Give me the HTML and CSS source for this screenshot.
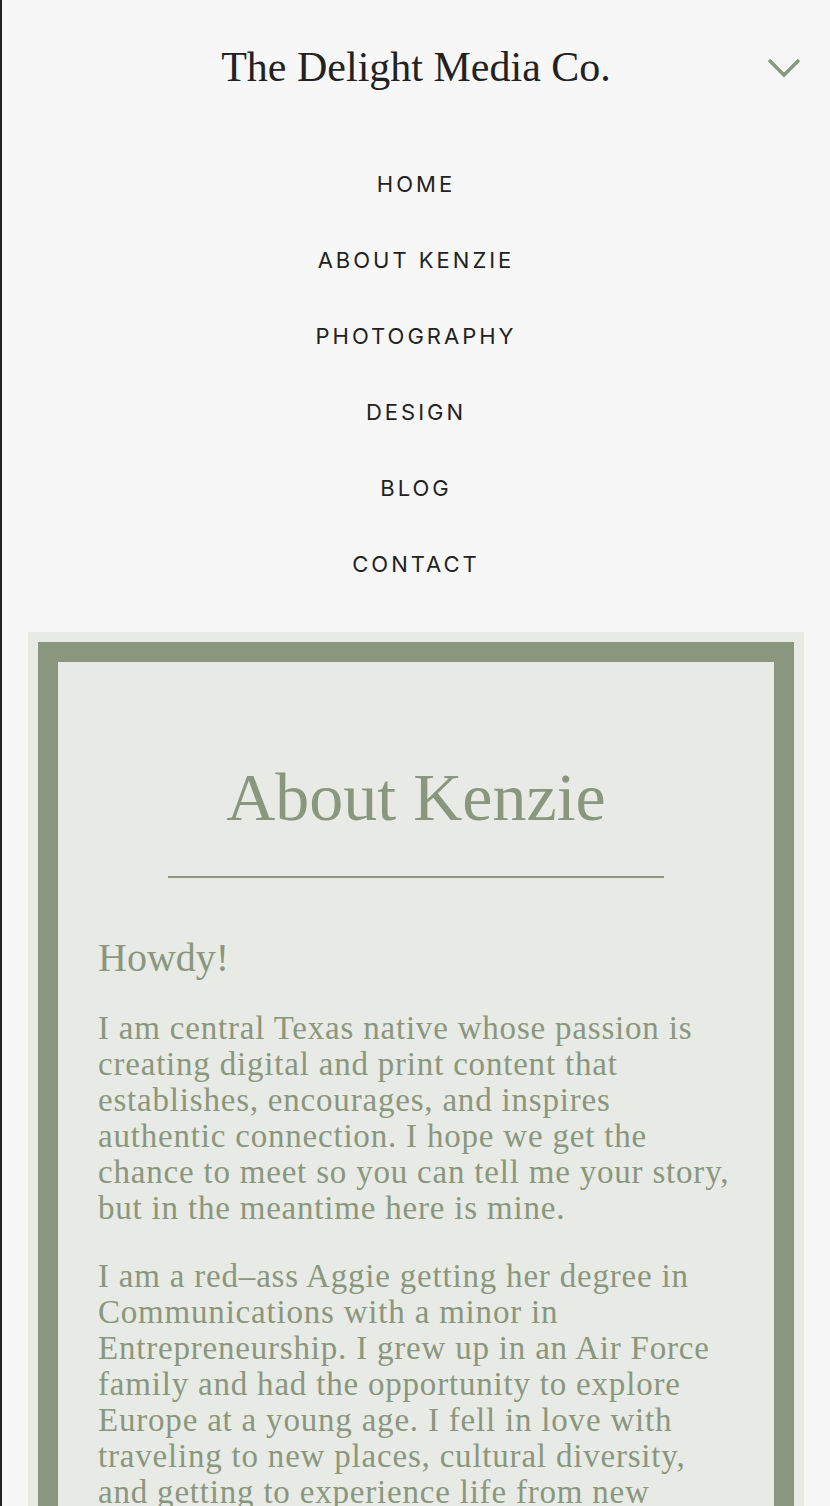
FILE: index.html
```html
<!DOCTYPE html>
<html lang="en">
<head>
<meta charset="utf-8">
<title>About Kenzie — The Delight Media Co.</title>
<link rel="stylesheet" href="styles.css">
</head>
<body>
<div class="page">
  <header class="site-header">
    <div class="brand">The Delight Media Co.</div>
    <button class="toggle" aria-label="Close menu">
      <svg width="34" height="20" viewBox="0 0 34 20"><polyline points="2,2 17,17 32,2" fill="none" stroke="#8a977e" stroke-width="3.5"/></svg>
    </button>
  </header>
  <nav class="menu">
    <a href="#">HOME</a>
    <a href="#">ABOUT KENZIE</a>
    <a href="#">PHOTOGRAPHY</a>
    <a href="#">DESIGN</a>
    <a href="#">BLOG</a>
    <a href="#">CONTACT</a>
  </nav>
  <main class="card">
    <div class="frame">
      <div class="inner">
        <h1 class="title">About Kenzie</h1>
        <hr class="rule">
        <h2 class="greeting">Howdy!</h2>
        <p class="text">I am central Texas native whose passion is creating digital and print content that establishes, encourages, and inspires authentic connection. I hope we get the chance to meet so you can tell me your story, but in the meantime here is mine.</p>
        <p class="text">I am a red–ass Aggie getting her degree in Communications with a minor in Entrepreneurship. I grew up in an Air Force family and had the opportunity to explore Europe at a young age. I fell in love with traveling to new places, cultural diversity, and getting to experience life from new perspectives. That curiosity is what led me to storytelling.</p>
      </div>
    </div>
  </main>
</div>
</body>
</html>
```
FILE: styles.css
```css
html, body {
  margin: 0;
  padding: 0;
}
body {
  background: #f7f7f7;
  overflow: hidden;
}
.page {
  border-left: 2px solid #222;
  min-height: 1506px;
  background: #f7f7f7;
}
.site-header {
  position: relative;
  height: 136px;
  display: flex;
  align-items: center;
  justify-content: center;
}
.brand {
  font-family: "Liberation Serif", serif;
  font-size: 42px;
  color: #222;
  margin-top: -2px;
}
.toggle {
  position: absolute;
  right: 29px;
  top: 58px;
  background: none;
  border: 0;
  padding: 0;
  width: 34px;
  height: 20px;
}
.toggle svg { display: block; }
.menu {
  display: flex;
  flex-direction: column;
  align-items: center;
  padding-top: 10px;
}
.menu a {
  display: flex;
  align-items: center;
  justify-content: center;
  height: 76px;
  font-family: Inter, "Liberation Sans", sans-serif;
  font-size: 22px;
  letter-spacing: 3px;
  color: #222;
  text-decoration: none;
}
.card {
  margin: 30px 26px 0;
  padding: 10px;
  background: #e8eae5;
}
.frame {
  border: 20px solid #8a977e;
  border-bottom: 0;
  background: #e8eae5;
}
.inner {
  padding: 95px 40px 0;
  color: #8a977e;
  font-family: "Liberation Serif", serif;
}
.title {
  margin: 0;
  text-align: center;
  font-weight: normal;
  font-size: 68px;
  line-height: 80px;
}
.rule {
  width: 496px;
  margin: 39px auto 0;
  border: 0;
  height: 2px;
  background: #8a977e;
}
.greeting {
  margin: 58px 0 0;
  font-weight: normal;
  font-size: 40px;
  line-height: 44px;
}
.text {
  margin: 30px 0 0;
  font-size: 33px;
  line-height: 36px;
  letter-spacing: 0.8px;
}
.text + .text { margin-top: 32px; }
```
